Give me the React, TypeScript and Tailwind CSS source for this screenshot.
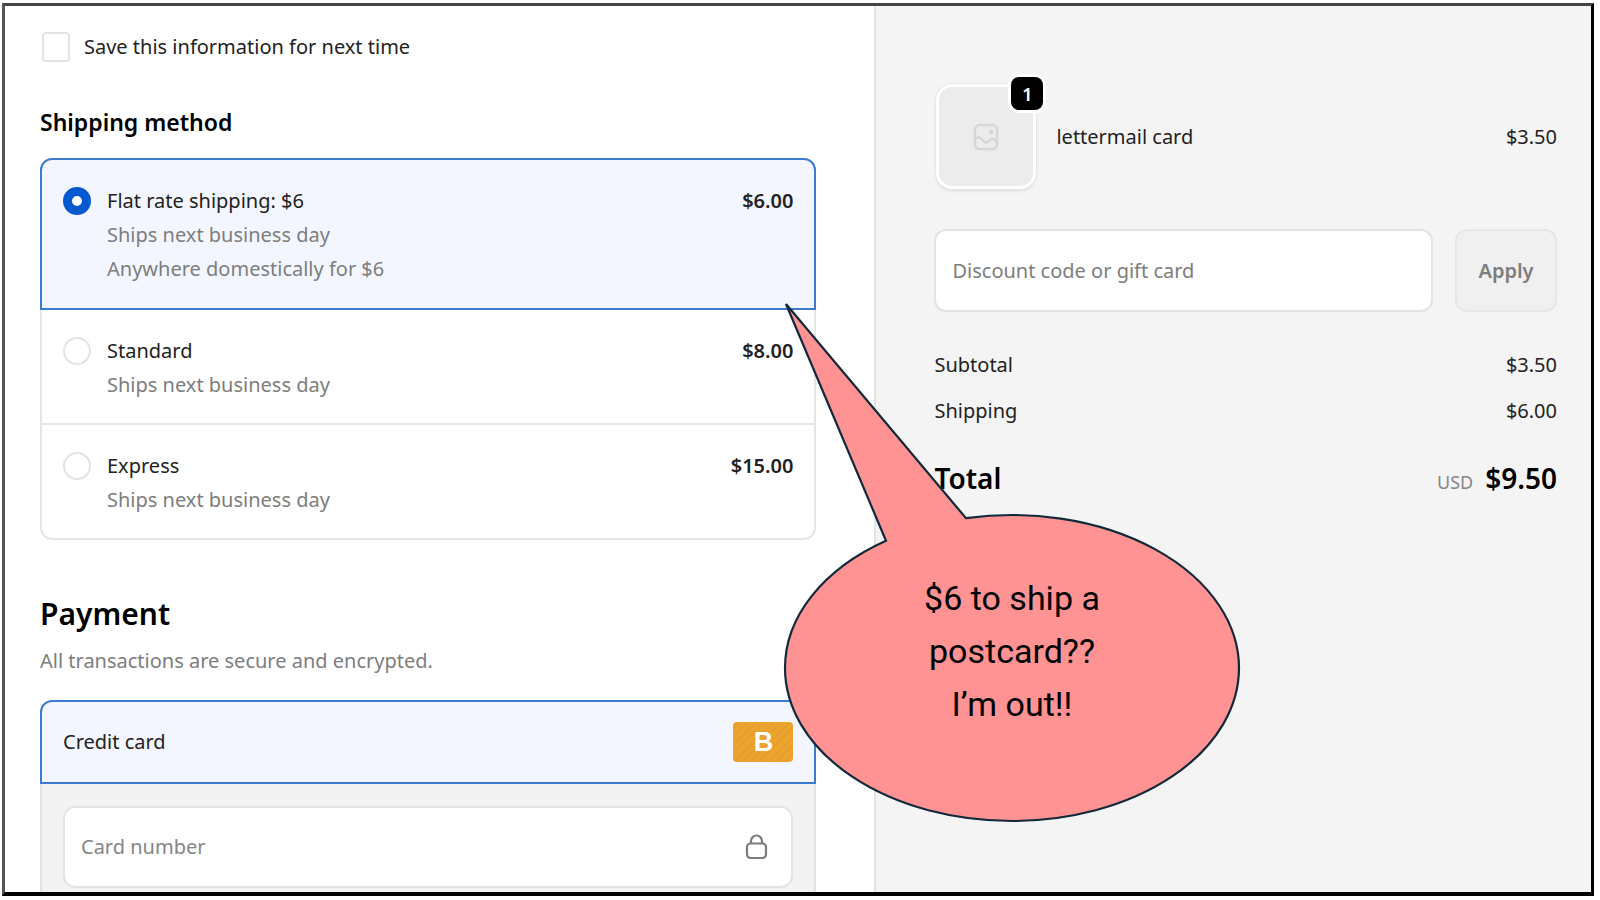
import { useState } from "react";

const shippingOptions = [
  {
    id: "flat",
    name: "Flat rate shipping: $6",
    price: "$6.00",
    notes: ["Ships next business day", "Anywhere domestically for $6"],
  },
  {
    id: "standard",
    name: "Standard",
    price: "$8.00",
    notes: ["Ships next business day"],
  },
  {
    id: "express",
    name: "Express",
    price: "$15.00",
    notes: ["Ships next business day"],
  },
];

function ShippingMethods() {
  const [selected, setSelected] = useState("flat");

  return (
    <fieldset className="mt-[42px]">
      <legend className="text-[23px] leading-8 font-semibold text-black">Shipping method</legend>
      <div className="mt-5 rounded-xl border-2 border-[#e6e6e6]">
        {shippingOptions.map((option) => (
          <label
            key={option.id}
            htmlFor={option.id}
            className={
              selected === option.id
                ? "-mx-0.5 -mt-0.5 flex gap-4 border-2 border-[#3c7bd0] bg-[#f4f6ff] px-[21px] pt-6 pb-[22px] first:rounded-t-xl last:rounded-b-xl"
                : "flex gap-4 border-[#e6e6e6] px-[21px] pt-6 pb-[21px] not-last:border-b-2"
            }
          >
            <input
              type="radio"
              id={option.id}
              name="shipping"
              checked={selected === option.id}
              onChange={() => setSelected(option.id)}
              className="mt-[3px] size-7 shrink-0 appearance-none rounded-full border-2 border-[#e3e3e3] bg-white checked:border-9 checked:border-[#0459d0]"
            />
            <span className="grow">
              <span className="block">{option.name}</span>
              {option.notes.map((note) => (
                <span key={note} className="block text-[#7d7d7d]">
                  {note}
                </span>
              ))}
            </span>
            <span className="font-semibold">{option.price}</span>
          </label>
        ))}
      </div>
    </fieldset>
  );
}

function LockIcon() {
  return (
    <svg viewBox="0 0 24 26" className="h-[26px] w-6" fill="none" stroke="#7d7d7d" strokeWidth="2.2">
      <rect x="2" y="9.500" width="19" height="14.500" rx="3.5" />
      <path d="M6 9.500V7a5.500 5.500 0 0 1 11 0V9.500" />
    </svg>
  );
}

function Payment() {
  return (
    <section className="mt-[54px]">
      <h2 className="text-[30px] leading-10 font-semibold text-black">Payment</h2>
      <p className="mt-[10px] text-[#7d7d7d]">All transactions are secure and encrypted.</p>
      <div className="mt-[22px] flex h-[84px] items-center justify-between rounded-t-xl border-2 border-[#3c7bd0] bg-[#f4f6ff] px-[21px]">
        <span>Credit card</span>
        <span className="flex h-10 w-[60px] items-center justify-center rounded-sm bg-[repeating-linear-gradient(135deg,#eda42b_0_3px,#e79f31_3px_6px)] font-['Liberation_Sans'] text-[27px] font-bold text-white">
          B
        </span>
      </div>
      <div className="border-x-2 border-[#e3e3e3] bg-[#f3f3f3] px-[21px] pt-[22px] pb-6">
        <div className="flex h-[82px] items-center rounded-xl border-2 border-[#e3e3e3] bg-white pr-[22px] pl-4">
          <input
            type="text"
            aria-label="Card number"
            placeholder="Card number"
            className="min-w-0 grow outline-none placeholder:text-[#858585]"
          />
          <LockIcon />
        </div>
      </div>
    </section>
  );
}

function ImageIcon() {
  return (
    <svg viewBox="0 0 26 28" className="h-7 w-[26px]" fill="none" stroke="#d6d6d6" strokeWidth="2.4">
      <rect x="2" y="2" width="22" height="24" rx="4.5" />
      <path d="M2 16.500c2-2.500 4-3 6-1s3 4 5.500 4 2.500-3 5-3.500 3.500 1 5.500 2.500" />
      <circle cx="18" cy="9" r="2.400" fill="#d6d6d6" stroke="none" />
    </svg>
  );
}

function OrderSummary() {
  return (
    <aside className="border-l-2 border-[#e3e3e3] bg-[#f4f4f4] pt-[78px] pr-[34px] pl-[58px]">
      <div className="flex items-center pl-0.5">
        <div className="relative flex h-[105px] w-[100px] items-center justify-center rounded-2xl border-3 border-white bg-[#ececec] shadow-[0_0_0_1px_#e6e6e6,0_2px_3px_#dcdcdc]">
          <ImageIcon />
          <span className="absolute -top-2.5 -right-2.5 flex h-[33px] w-8 items-center justify-center rounded-lg bg-black text-lg font-semibold text-white ring-3 ring-white">
            1
          </span>
        </div>
        <span className="ml-5 grow">lettermail card</span>
        <span>$3.50</span>
      </div>

      <form className="mt-10 flex gap-[22px]" onSubmit={(e) => e.preventDefault()}>
        <input
          type="text"
          aria-label="Discount code or gift card"
          placeholder="Discount code or gift card"
          className="h-[83px] min-w-0 grow rounded-xl border-2 border-[#e3e3e3] bg-white px-4 outline-none placeholder:text-[#7d7d7d]"
        />
        <button
          type="submit"
          className="w-[102px] shrink-0 rounded-xl border-2 border-[#e6e6e6] bg-[#f0f0f0] font-semibold text-[#7d7d7d]"
        >
          Apply
        </button>
      </form>

      <dl className="mt-9">
        <div className="flex justify-between">
          <dt>Subtotal</dt>
          <dd>$3.50</dd>
        </div>
        <div className="mt-3 flex justify-between">
          <dt>Shipping</dt>
          <dd>$6.00</dd>
        </div>
        <div className="mt-[30px] flex items-baseline justify-between text-[28px] leading-10 font-semibold text-black">
          <dt>Total</dt>
          <dd className="flex items-baseline gap-3">
            <span className="text-lg font-normal text-[#858585]">USD</span>
            $9.50
          </dd>
        </div>
      </dl>
    </aside>
  );
}

function Callout() {
  return (
    <div className="absolute top-[301px] left-[783px] h-[522px] w-[458px]">
      <svg viewBox="783 301 458 522" className="size-full" fill="#ff9292" stroke="#11293a" strokeWidth="2.2">
        <path d="M786 304 L966 518.2 A227 153 0 0 1 1239 668 A227 153 0 0 1 1012 821 A227 153 0 0 1 785 668 A227 153 0 0 1 886 540.7 Z" />
      </svg>
      <p className="absolute inset-x-0 top-[271px] text-center font-[Roboto] text-[34px] leading-[53px] text-black">
        $6 to ship a<br />
        postcard??
        <br />
        I’m out!!
      </p>
    </div>
  );
}

export default function App() {
  return (
    <div className="relative h-screen overflow-hidden bg-white pt-[3px] pr-1.5 pb-1 pl-0.5 font-['Noto_Sans',sans-serif] text-xl leading-[34px] text-[#222]">
      <div className="grid h-full grid-cols-[870fr_717fr] overflow-hidden border-3 border-b-4 border-black border-t-[#444] border-l-[#555]">
        <main className="min-w-0 pt-6 pr-[58px] pl-[35px]">
          <div className="flex items-center gap-3.5 pl-0.5">
            <input
              type="checkbox"
              id="save-info"
              className="h-[30px] w-7 appearance-none rounded-sm border-2 border-[#e3e3e3] bg-white checked:bg-[#0459d0]"
            />
            <label htmlFor="save-info">Save this information for next time</label>
          </div>
          <ShippingMethods />
          <Payment />
        </main>
        <OrderSummary />
      </div>
      <Callout />
    </div>
  );
}
